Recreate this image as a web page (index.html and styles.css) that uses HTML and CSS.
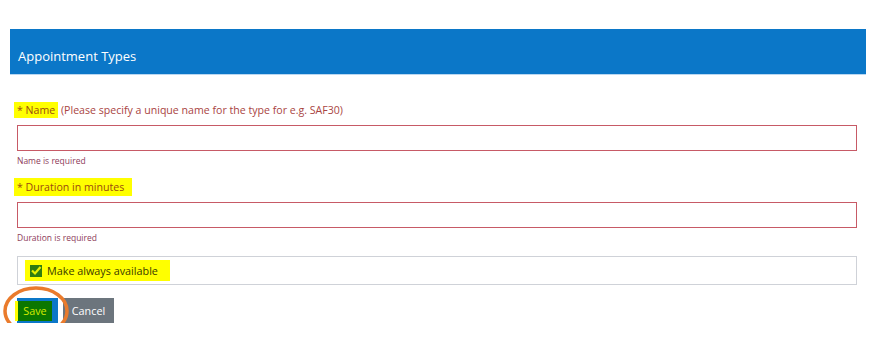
FILE: index.html
```html
<!DOCTYPE html>
<html lang="en">
  <head>
    <meta charset="utf-8">
    <title>Appointment Types</title>
    <link rel="stylesheet" href="styles.css">
  </head>
  <body>
    <div class="panel-head">
      <h1 class="panel-title">Appointment Types</h1>
    </div>
    <form class="form">
      <label class="field-label"><span class="mark">* Name</span> (Please specify a unique name for the type for e.g. SAF30)</label>
      <input class="field-input" type="text">
      <div class="field-error">Name is required</div>

      <label class="field-label label-gap"><span class="mark mark-wide">* Duration in minutes</span></label>
      <input class="field-input" type="text">
      <div class="field-error">Duration is required</div>

      <div class="check-box">
        <span class="mark check-mark">
          <span class="tick">
            <svg width="12" height="11" viewBox="0 0 12 11">
              <path d="M2 5.5 L5 8.5 L10.5 2" fill="none" stroke="#e8f000" stroke-width="2.2"/>
            </svg>
          </span>
          Make always available
        </span>
      </div>

      <div class="actions">
        <button type="button" class="btn btn-save"><span class="save-mark">Save</span></button>
        <button type="button" class="btn btn-cancel">Cancel</button>
        <svg class="circle" width="70" height="52" viewBox="0 0 70 52">
          <ellipse cx="35" cy="26" rx="31" ry="23" fill="none" stroke="#ea7b2c" stroke-width="3.5"/>
        </svg>
      </div>
    </form>
  </body>
</html>
```

FILE: styles.css
```css
body{
  margin : 0;
  background : #fff;
  font-family : "Open Sans", "Noto Sans", sans-serif;
}
.panel-head{
  margin : 29px 5px 0 10px;
  height : 46px;
  background : #0b77c8;
  border-bottom : 1px solid #b9d7f1;
  display : flex;
  align-items : center;
  padding : 8px 8px 0;
  box-sizing : border-box;
}
.panel-title{
  margin : 0;
  font-size : 13px;
  font-weight : normal;
  color : #fff;
}
.form{
  padding : 0 14px 0 17px;
}
.field-label{
  display : block;
  margin-top : 26px;
  margin-bottom : 6px;
  line-height : 18px;
  font-size : 10.6px;
  color : #a94442;
}
.label-gap{
  margin-top : 10px;
}
.mark{
  background : #ffff00;
  color : #9a4a10;
  padding : 1px 3px;
  margin-left : -3px;
}
.mark-wide{
  padding : 2px 8px 2px 3px;
}
.field-input{
  display : block;
  width : 100%;
  height : 26px;
  box-sizing : border-box;
  border : 1px solid #c75a66;
  outline : none;
  margin : 0;
}
.field-error{
  margin-top : 3px;
  font-size : 8.5px;
  line-height : 14px;
  color : #8e3b5a;
}
.check-box{
  margin-top : 11px;
  height : 29px;
  box-sizing : border-box;
  border : 1px solid #cfd2d8;
  display : flex;
  align-items : center;
  padding-left : 10px;
}
.check-mark{
  display : inline-flex;
  align-items : center;
  gap : 5px;
  padding : 2px 12px 2px 5px;
  font-size : 10.8px;
  line-height : 17px;
  color : #3a3a00;
}
.tick{
  width : 12px;
  height : 12px;
  background : #2f7d10;
  display : inline-flex;
  align-items : center;
  justify-content : center;
}
.actions{
  position : relative;
  margin-top : 13px;
  display : flex;
  gap : 5px;
}
.btn{
  height : 25px;
  border : 0;
  padding : 0;
  font-family : inherit;
  font-size : 10.8px;
  cursor : pointer;
}
.btn-save{
  width : 41px;
  background : #0b77c8;
  display : flex;
  align-items : center;
}
.save-mark{
  display : block;
  margin-left : -2px;
  border-left : 3px solid #ffff00;
  width : 34px;
  height : 20px;
  line-height : 20px;
  background : #0b7700;
  color : #d4ea00;
}
.btn-cancel{
  width : 51px;
  background : #6c757d;
  color : #fff;
}
.circle{
  position : absolute;
  left : -16px;
  top : -13px;
  pointer-events : none;
}
```
